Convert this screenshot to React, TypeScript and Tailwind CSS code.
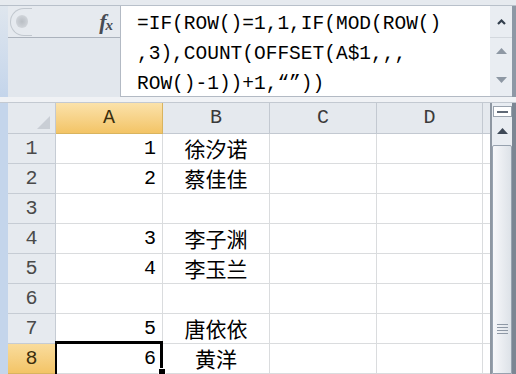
import React from 'react';

const rows: { n: string; a: string; b: string }[] = [
  { n: '1', a: '1', b: '徐汐诺' },
  { n: '2', a: '2', b: '蔡佳佳' },
  { n: '3', a: '', b: '' },
  { n: '4', a: '3', b: '李子渊' },
  { n: '5', a: '4', b: '李玉兰' },
  { n: '6', a: '', b: '' },
  { n: '7', a: '5', b: '唐依依' },
  { n: '8', a: '6', b: '黄洋' },
];

const mono = "font-['Liberation_Mono','Noto_Sans_CJK_SC',monospace]";
const cjk = "font-['Noto_Sans_CJK_SC',sans-serif]";

function TriUp({ color }: { color: string }) {
  return (
    <svg width="11" height="6" viewBox="0 0 11 6">
      <polygon points="0,6 11,6 5.5,0" fill={color} />
    </svg>
  );
}

function TriDown({ color }: { color: string }) {
  return (
    <svg width="11" height="6" viewBox="0 0 11 6">
      <polygon points="0,0 11,0 5.5,6" fill={color} />
    </svg>
  );
}

function FormulaBar() {
  return (
    <div className="h-[91px] flex">
      <div className="w-[8px] bg-gradient-to-b from-[#dfe6ee] to-[#c4d5eb]" />
      <div className="w-[112px] flex flex-col bg-[#e2e7ed]">
        <div className="h-[32px] flex items-center justify-between border-b border-[#abb2bc] bg-[#e6eaef] pl-[2px] pr-[7px]">
          <div className="w-[22px] h-[28px] rounded-l-[14px] border-l border-y border-[#c2c8cf] flex items-center pl-[5px]">
            <div className="w-[12px] h-[13px] rounded-full bg-[radial-gradient(circle,#b9bec4,#d9dde2)]" />
          </div>
          <div className="font-['Liberation_Serif',serif] italic font-bold text-[#474c54] leading-none flex items-end">
            <span className="text-[22px]">f</span>
            <span className="text-[15px] -ml-[1px]">x</span>
          </div>
        </div>
      </div>
      <div className={`w-[370px] bg-white border-l border-b border-[#b3bac4] pt-[3px] pl-[16px] text-[19.5px] leading-[30px] text-black whitespace-pre ${mono}`}>
        <div>=IF(ROW()=1,1,IF(MOD(ROW()</div>
        <div>,3),COUNT(OFFSET(A$1,,,</div>
        <div>ROW()-1))+1,“”))</div>
      </div>
      <div className="w-[22px] bg-[#e9edf2] border-b border-[#b3bac4] flex flex-col items-center">
        <div className="h-[32px] w-full flex items-center justify-center border-b border-[#d3d8de]">
          <svg width="9" height="6" viewBox="0 0 9 6">
            <polyline points="1,5 4.5,1.5 8,5" fill="none" stroke="#34404e" strokeWidth="2.2" />
          </svg>
        </div>
        <div className="h-[26px] flex items-center">
          <TriUp color="#8e98a4" />
        </div>
        <div className="h-[32px] flex items-center">
          <TriDown color="#8e98a4" />
        </div>
      </div>
      <div className="w-[4px] bg-[#8d98a5]" />
    </div>
  );
}

function Sheet() {
  const hdr = 'h-[31px] border-r border-b border-[#c3c9d1] flex items-center justify-center text-[20px] text-[#3a3a3a]';
  const cell = 'h-[30px] border-r border-b border-[#dadcde] flex items-center';
  return (
    <div className="flex flex-1">
      <div className="w-[8px] bg-[#c4d5eb]" />
      <div className={`w-[482px] bg-white grid grid-cols-[48px_107px_107px_107px_106px_7px] content-start ${mono}`}>
        <div className={`${hdr} bg-[#e5e9ee] relative`}>
          <svg className="absolute right-[5px] bottom-[4px]" width="13" height="13" viewBox="0 0 13 13">
            <polygon points="13,0 13,13 0,13" fill="#c9ced5" />
          </svg>
        </div>
        <div className={`${hdr} bg-gradient-to-b from-[#fbe2aa] to-[#f3c465] border-[#d9b45f] text-[#3b2f0d]`}>A</div>
        <div className={`${hdr} bg-[#e5e9ee]`}>B</div>
        <div className={`${hdr} bg-[#e5e9ee]`}>C</div>
        <div className={`${hdr} bg-[#e5e9ee]`}>D</div>
        <div className={`${hdr} bg-[#e5e9ee] border-r-0`} />
        {rows.map((r) => {
          const sel = r.n === '8';
          return (
            <React.Fragment key={r.n}>
              <div
                className={`h-[30px] border-r border-b flex items-center justify-center text-[20px] ${
                  sel
                    ? 'bg-gradient-to-b from-[#f9dc9c] to-[#f3c466] border-[#d9b45f] text-[#3b2f0d]'
                    : 'bg-[#e6eaef] border-[#c6ccd4] text-[#4a4a4a]'
                }`}
              >
                {r.n}
              </div>
              <div className={`${cell} justify-end pr-[6px] text-[20px] text-black relative`}>
                {r.a}
                {sel && (
                  <>
                    <div className="absolute left-[-1px] top-[-3px] w-[108px] h-[40px] border-[3px] border-l-2 border-black" />
                    <div className="absolute left-[102px] top-[24px] w-[8px] h-[8px] bg-black border border-white" />
                  </>
                )}
              </div>
              <div className={`${cell} justify-center text-[21px] text-black ${cjk}`}>{r.b}</div>
              <div className={cell} />
              <div className={cell} />
              <div className={`${cell} border-r-0`} />
            </React.Fragment>
          );
        })}
      </div>
      <div className="w-[22px] bg-[#e9edf2] border-l-2 border-[#8e97a2] flex flex-col items-center">
        <div className="mt-[3px] w-[19px] h-[11px] bg-white border border-[#9aa3ae] flex items-center justify-center">
          <div className="w-[11px] h-[2px] bg-[#5f6976]" />
        </div>
        <div className="h-[28px] flex items-center">
          <TriUp color="#3e4957" />
        </div>
        <div className="w-[20px] flex-1 rounded-t-[2px] border border-[#97a2af] bg-gradient-to-r from-[#f7f8fa] to-[#dde2e8] flex flex-col items-center pt-[178px] gap-[2px]">
          <div className="w-[11px] h-[1px] bg-[#8e98a5]" />
          <div className="w-[11px] h-[1px] bg-[#8e98a5]" />
          <div className="w-[11px] h-[1px] bg-[#8e98a5]" />
          <div className="w-[11px] h-[1px] bg-[#8e98a5]" />
        </div>
      </div>
      <div className="w-[4px] bg-[#7b8693]" />
    </div>
  );
}

export default function App() {
  return (
    <div className="w-[516px] h-[374px] overflow-hidden bg-[#e4e9ef] flex flex-col">
      <div className="h-[7px] bg-[#e6eaef] border-b border-[#b8c0ca]" />
      <FormulaBar />
      <div className="h-[6px] bg-[#f0f2f5] border-b border-[#c3c9d1]" />
      <Sheet />
    </div>
  );
}
